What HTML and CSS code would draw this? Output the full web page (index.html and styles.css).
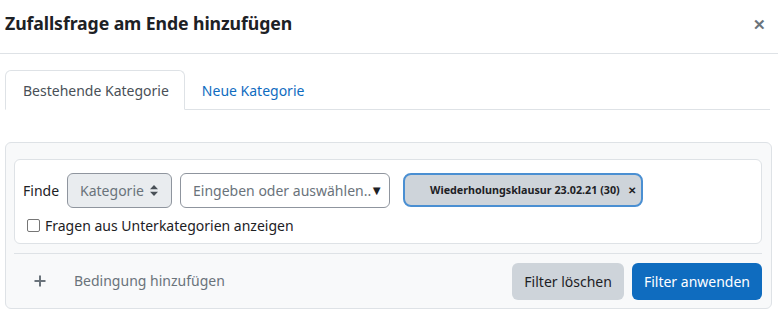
FILE: index.html
```html
<!DOCTYPE html>
<html lang="de">
<head>
<meta charset="utf-8">
<link rel="stylesheet" href="styles.css">
</head>
<body>
<div class="modal">
  <div class="modal-header">
    <h5 class="modal-title">Zufallsfrage am Ende hinzufügen</h5>
    <span class="close">&#x2715;</span>
  </div>
  <div class="modal-body">
    <ul class="tabs">
      <li class="tab active">Bestehende Kategorie</li>
      <li class="tab">Neue Kategorie</li>
    </ul>
    <div class="filter-panel">
      <div class="filter-card">
        <div class="filter-row">
          <span class="label">Finde</span>
          <span class="select">Kategorie <svg class="updown" width="8" height="11" viewBox="0 0 8 11"><path d="M4 0L8 4.2H0Z M4 11L8 6.8H0Z" fill="#495057"/></svg></span>
          <span class="input">Eingeben oder auswählen..<span class="caret">&#9660;</span></span>
          <span class="chip">Wiederholungsklausur 23.02.21 (30) <span class="chip-x">&#x2715;</span></span>
        </div>
        <label class="check"><span class="box"></span>Fragen aus Unterkategorien anzeigen</label>
      </div>
      <div class="filter-footer">
        <span class="add"><svg width="12" height="12" viewBox="0 0 12 12"><path d="M6 0.5V11.5M0.5 6H11.5" stroke="#6a737b" stroke-width="2"/></svg></span>
        <span class="add-text">Bedingung hinzufügen</span>
        <span class="spacer"></span>
        <span class="btn btn-secondary">Filter löschen</span>
        <span class="btn btn-primary">Filter anwenden</span>
      </div>
    </div>
  </div>
</div>
</body>
</html>
```
FILE: styles.css
```css
* { box-sizing: border-box; }
html, body { margin: 0; padding: 0; background: #fff; }
body {
  font-family: "Noto Sans", "Open Sans", sans-serif;
  font-size: 14px;
  color: #1d2125;
  width: 778px;
  height: 316px;
  overflow: hidden;
}
.modal { width: 778px; }
.modal-header {
  display: flex;
  align-items: center;
  justify-content: space-between;
  height: 54px;
  padding: 0 12px 8px 5px;
  border-bottom: 1px solid #dee2e6;
}
.modal-title {
  margin: 0;
  font-size: 17.7px;
  font-weight: 700;
  color: #1d2125;
  letter-spacing: -0.1px;
}
.close {
  font-size: 15px;
  font-weight: 700;
  color: #6a737b;
  margin-top: 3px;
}
.modal-body { padding: 16px 8px 0 5px; }
.tabs {
  list-style: none;
  margin: 0;
  padding: 0;
  display: flex;
  border-bottom: 1px solid #dee2e6;
  height: 40px;
}
.tab {
  padding: 0 16px 0 16px;
  display: flex;
  align-items: center;
  color: #0f6cbf;
  border: 1px solid transparent;
  border-radius: 6px 6px 0 0;
  margin-bottom: -1px;
}
.tab.active {
  color: #495057;
  background: #fff;
  border-color: #dee2e6 #dee2e6 #fff;
  padding-left: 17px;
  padding-right: 15px;
}
.filter-panel {
  margin-top: 32px;
  width: 767px;
  background: #f8f9fa;
  border: 1px solid #dee2e6;
  border-radius: 6px;
  padding: 16px 9px 0 8px;
}
.filter-card {
  background: #fff;
  border: 1px solid #dee2e6;
  border-radius: 6px;
  height: 85px;
  padding: 12px 8px 0 8px;
}
.filter-row {
  display: flex;
  align-items: center;
  height: 36px;
}
.label { margin-right: 8px; }
.select {
  display: flex;
  align-items: center;
  gap: 6px;
  height: 35px;
  width: 105px;
  padding: 0 0 0 12px;
  background: #e9ecef;
  border: 1px solid #8f959e;
  border-radius: 6px;
  color: #6a737b;
}
.updown { margin-top: 1px; }
.input {
  display: flex;
  align-items: center;
  height: 35px;
  width: 210px;
  margin-left: 8px;
  padding: 0 0 0 12px;
  border: 1px solid #8f959e;
  border-radius: 6px;
  color: #6a737b;
  white-space: nowrap;
  overflow: hidden;
}
.caret { color: #1d2125; font-size: 13px; margin-left: -1px; }
.chip {
  display: flex;
  align-items: center;
  margin-left: 13px;
  height: 34px;
  width: 240px;
  padding: 0 0 0 25px;
  background: #ced4da;
  border: 2px solid #4a8fd2;
  border-radius: 8px;
  font-size: 10.75px;
  font-weight: 700;
  color: #1d2125;
  white-space: nowrap;
}
.chip-x { margin-left: 8px; font-size: 10px; }
.check {
  display: flex;
  align-items: center;
  margin-top: 8px;
  margin-left: 4px;
  color: #1d2125;
}
.box {
  width: 13px;
  height: 13px;
  border: 1px solid #767676;
  border-radius: 2px;
  margin-right: 5px;
  background: #fff;
}
.filter-footer {
  display: flex;
  align-items: center;
  margin-top: 9px;
  border-top: 1px solid #dee2e6;
  height: 55px;
  padding: 0 0 1px 0;
}
.add { display: flex; margin-left: 20px; }
.add-text { margin-left: 28px; color: #6a737b; }
.spacer { flex: 1; }
.btn {
  display: flex;
  align-items: center;
  height: 37px;
  padding: 0 12px;
  border-radius: 6px;
  margin-top: 2px;
}
.btn-secondary { background: #ced4da; color: #1d2125; }
.btn-primary { background: #0f6cbf; color: #fff; margin-left: 8px; }
```
